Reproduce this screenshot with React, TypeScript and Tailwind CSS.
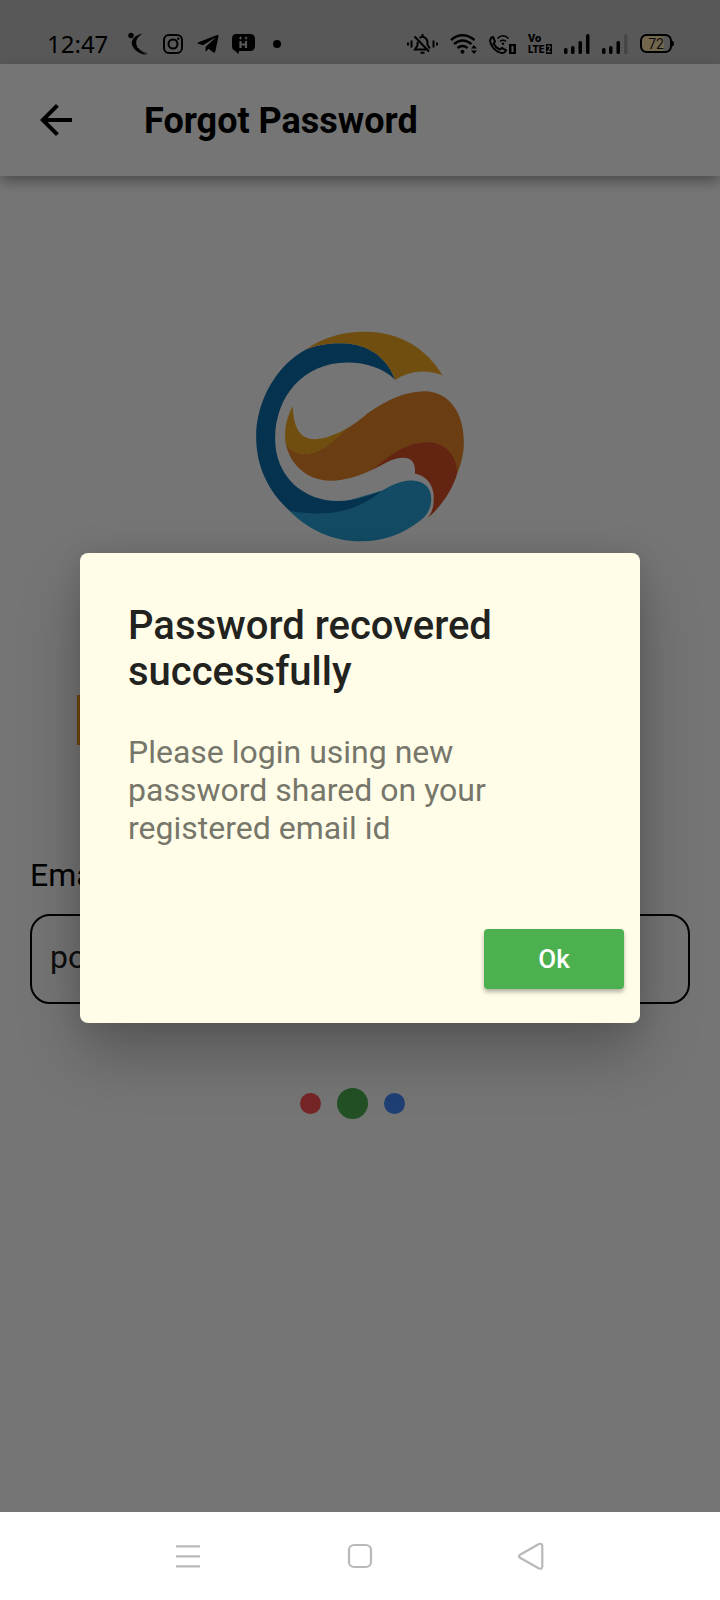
import { MdArrowBack } from "react-icons/md";
import { FaTelegramPlane } from "react-icons/fa";

function StatusBar() {
  return (
    <div className="flex h-16 items-center justify-between bg-[#bfbfbf] pt-6 pr-[46px] pl-[47px] text-black">
      <div className="flex items-center gap-[11px]">
        <time className="mr-[7px] font-['Noto_Sans',sans-serif] text-2xl leading-6">12:47</time>
        <svg className="size-6" viewBox="0 0 24 24" aria-hidden="true">
          <circle cx="5" cy="3.500" r="2.700" />
          <path d="M17 1.500C8 3 4 9 6.500 14C9 19 14 22 20.500 23C17 20.500 12 18.500 10.500 13C9.300 8 12 4 17 1.500Z" />
          <path d="M12 16C14.500 19 17 20.500 21 21.500" fill="none" stroke="currentColor" strokeWidth="0.800" />
        </svg>
        <svg className="size-6" viewBox="0 0 24 24" fill="none" stroke="currentColor" strokeWidth="2" aria-hidden="true">
          <rect x="3" y="3" width="18" height="18" rx="5" />
          <circle cx="12" cy="12" r="4.500" />
          <circle cx="17.300" cy="6.800" r="1.200" fill="currentColor" stroke="none" />
        </svg>
        <FaTelegramPlane className="size-6" aria-hidden="true" />
        <svg className="size-6" viewBox="0 0 24 24" aria-hidden="true">
          <path d="M5 2H19Q24 2 24 7V14Q24 19 19 19H8L7.500 22L3.500 18.500Q1 17.500 1 14V7Q1 2 5 2Z" />
          <path d="M9.500 9V16M15 9V16M9 12.500H15" fill="none" stroke="#bfbfbf" strokeWidth="2.200" />
          <path d="M9.500 4.500V7.500M8 6H11M15 4.500V7.500M13.500 6H16.500" fill="none" stroke="#bfbfbf" />
        </svg>
        <svg className="size-6" viewBox="0 0 24 24" aria-hidden="true">
          <circle cx="11" cy="12" r="4" />
        </svg>
      </div>
      <div className="flex items-center gap-3">
        <svg className="h-5 w-[31px]" viewBox="0 0 31 20" fill="none" stroke="currentColor" strokeWidth="2" aria-hidden="true">
          <path d="M1 8.500V11.500M4.500 6.500V13.500M26.500 6.500V13.500M30 8.500V11.500" />
          <path d="M12.500 4Q15.500 1.500 18.500 4Q20.500 5.500 20.500 9V11M19 15.500H8L10.500 11.500V8M7.500 2.500L22 17.500M20.500 11L23 14.500" />
          <path d="M15.500 0V3M13.500 18.700H17.500" />
        </svg>
        <svg className="h-5 w-[27px]" viewBox="0 0 27 20" fill="none" stroke="currentColor" strokeWidth="2.400" aria-hidden="true">
          <path d="M1 6Q12.500-3.500 24.500 6M4 10Q12.500 3 21.500 10M7.500 14Q12.500 10 17.500 14" />
          <circle cx="12.500" cy="17.800" r="2" fill="currentColor" stroke="none" />
          <path d="M21 14.500L24 11L27 14.500ZM21 16.500L24 20L27 16.500Z" fill="currentColor" stroke="none" />
        </svg>
        <svg className="h-5 w-[27px]" viewBox="0 0 27 20" fill="none" stroke="currentColor" strokeWidth="2" aria-hidden="true">
          <path d="M4 3L6 7.500L4.500 9.500Q6.500 13.500 10.500 15.500L13 14L17 16.500Q16 19 13 19Q8 18.500 4 13.500Q0 8 1.500 5Q2.200 3.300 4 3Z" />
          <path d="M8.500 4.500Q14-1 19.500 4.500M11 7.500Q14 5 17 7.500" strokeWidth="1.600" />
          <circle cx="14" cy="9.800" r="1.200" fill="currentColor" stroke="none" />
          <path d="M20 10H27V20H20ZM22.500 12V18H24.500V12Z" fill="currentColor" fillRule="evenodd" stroke="none" />
        </svg>
        <svg className="h-6 w-6 font-[Roboto,sans-serif] font-black" viewBox="0 0 24 24" fill="currentColor" aria-label="VoLTE 2">
          <text x="0" y="10" fontSize="11">Vo</text>
          <text x="0" y="21" fontSize="10">LTE</text>
          <path d="M18 12H24V22H18Z" />
          <path d="M19.200 14.700Q21 13 22.200 15Q22.300 16.500 19.600 19.600H22.700" fill="none" stroke="#bfbfbf" strokeWidth="1.200" />
        </svg>
        <svg className="h-5 w-[26px]" viewBox="0 0 26 20" fill="currentColor" aria-hidden="true">
          <rect x="0" y="14" width="3.500" height="6" rx="1.500" />
          <rect x="7" y="12" width="3.500" height="8" rx="1.500" />
          <rect x="14.500" y="7" width="3.500" height="13" rx="1.500" />
          <rect x="22" y="0" width="3.500" height="20" rx="1.500" />
        </svg>
        <svg className="h-5 w-[26px]" viewBox="0 0 26 20" fill="currentColor" aria-hidden="true">
          <rect x="0" y="14" width="3.500" height="6" rx="1.500" />
          <rect x="7" y="12" width="3.500" height="8" rx="1.500" />
          <rect x="14.500" y="7" width="3.500" height="13" rx="1.500" />
          <rect x="22" y="0" width="3.500" height="20" rx="1.500" opacity="0.200" />
        </svg>
        <svg className="h-5 w-[34px]" viewBox="0 0 34 20" aria-label="Battery 72 percent">
          <rect x="2" y="2" width="22" height="16" rx="4" fill="#f8dfa8" />
          <rect x="1" y="1" width="30" height="17" rx="5.500" fill="none" stroke="currentColor" strokeWidth="2" />
          <path d="M32 6.500Q34 7 34 9.500Q34 12 32 12.500Z" />
          <text x="16" y="14.500" textAnchor="middle" fontSize="14" fill="#222" className="font-[Roboto,sans-serif]">72</text>
        </svg>
      </div>
    </div>
  );
}

function Logo() {
  return (
    <svg className="h-[211px] w-[209px]" viewBox="48 62 627 634" aria-label="Logo">
      <path fill="#29a3d7" d="M148 602L295 580L425 542C465 517 495 510 520 511C555 514 574 535 574 565C575 595 560 617 543 630C490 673 430 694 365 694C280 695 205 660 148 602Z" />
      <path fill="#0d6fac" d="M196 118C230 104 270 97 310 99C385 102 440 140 466 209C430 175 380 157 322 157C190 157 105 260 105 385C105 500 190 573 295 573C345 572 390 558 425 542C380 580 320 610 240 610C205 610 175 608 148 602C85 545 48 470 48 380C48 270 110 165 196 118Z" />
      <path fill="#f3aa23" d="M196 118C250 80 310 64 375 64C480 64 560 115 608 195C560 175 505 182 466 209C440 140 385 102 310 99C270 97 230 104 196 118Z" />
      <path fill="#e68529" d="M136 395C150 430 200 445 245 415C275 397 290 377 320 355C345 342 360 328 385 308C440 268 500 243 555 243C630 245 672 310 672 395C672 430 665 460 652 490L600 430L540 425L440 452L395 480C355 498 320 512 272 512C195 512 145 455 136 395Z" />
      <path fill="#f3aa23" d="M158 287C160 345 175 387 225 387C255 387 290 372 325 353C290 380 255 432 190 432C160 432 142 415 136 395C132 355 140 320 158 287Z" />
      <path fill="#d95029" d="M395 480C440 445 490 396 565 396C615 398 652 435 652 490C640 535 605 590 562 625C580 605 583 580 581 550C575 515 555 497 525 490C527 465 520 443 490 443C455 443 430 465 395 480Z" />
    </svg>
  );
}

function NavigationBar() {
  return (
    <nav className="flex h-[88px] items-center justify-center gap-36 bg-white text-[#b9b9b9]">
      <button type="button" aria-label="Recent apps">
        <svg className="size-7" viewBox="0 0 28 28" fill="none" stroke="currentColor" strokeWidth="2.200">
          <path d="M2 4.300H26M2 14.300H26M2 24.300H26" />
        </svg>
      </button>
      <button type="button" aria-label="Home">
        <svg className="size-7" viewBox="0 0 28 28" fill="none" stroke="currentColor" strokeWidth="2.200">
          <rect x="3" y="3" width="22" height="22" rx="5" />
        </svg>
      </button>
      <button type="button" aria-label="Back">
        <svg className="size-7" viewBox="0 0 28 28" fill="none" stroke="currentColor" strokeWidth="2.200" strokeLinejoin="round">
          <path d="M2 12.800L21 2Q24 1 24.300 4V24.500Q24 27.500 21 26.500L2 15.800Q0 14.300 2 12.800Z" />
        </svg>
      </button>
    </nav>
  );
}

function RecoveredDialog() {
  return (
    <div className="absolute inset-0 flex items-center justify-center bg-black/54 px-20 pt-16">
      <div
        role="dialog"
        aria-modal="true"
        aria-labelledby="dialog-title"
        className="w-full max-w-[560px] rounded-lg bg-[#fffde7] pb-[34px] shadow-[0_30px_60px_rgba(0,0,0,0.26),0_0_24px_rgba(0,0,0,0.08)]"
      >
        <h2 id="dialog-title" className="px-12 pt-[50px] text-[40px] leading-[46px] font-medium text-[#22221f]">
          Password recovered successfully
        </h2>
        <p className="px-12 pt-[38px] text-[32px] leading-[38px] text-[#76766b]">
          Please login using new password shared on your registered email id
        </p>
        <div className="flex justify-end pt-[82px] pr-4">
          <button
            type="button"
            className="h-[60px] w-[140px] rounded bg-[#4caf50] text-[26px] leading-8 font-medium text-white shadow-[0_3px_4px_rgba(0,0,0,0.3)]"
          >
            Ok
          </button>
        </div>
      </div>
    </div>
  );
}

export default function App() {
  return (
    <div className="flex min-h-screen flex-col bg-white font-[Roboto,sans-serif]">
      <div className="relative flex flex-1 flex-col">
        <StatusBar />
        <header className="flex h-28 items-center gap-16 bg-white pl-8 text-black shadow-[0_6px_12px_-1px_rgba(0,0,0,0.36)]">
          <button type="button" aria-label="Back">
            <MdArrowBack className="size-12" />
          </button>
          <h1 className="pt-0.5 text-4xl leading-10 font-bold">Forgot Password</h1>
        </header>
        <main className="flex flex-1 flex-col px-[30px] pt-[155px]">
          <div className="flex justify-center">
            <Logo />
          </div>
          <div className="mx-[47px] mt-[153px] h-[50px] w-20 bg-[#f09d1e]" />
          <label htmlFor="email" className="mt-[111px] text-[32px] leading-[38px] text-black">
            Email
          </label>
          <input
            id="email"
            type="email"
            defaultValue="po"
            className="mt-5 h-[90px] w-full rounded-[20px] border-2 border-black bg-white px-[18px] pb-1 text-[32px] text-[#222]"
          />
          <div className="flex items-center justify-center gap-4 pt-[84px] pr-4" role="status" aria-label="Loading">
            <span className="size-[21px] rounded-full bg-[#ff5252]" />
            <span className="size-[31px] rounded-full bg-[#4caf50]" />
            <span className="size-[21px] rounded-full bg-[#448aff]" />
          </div>
        </main>
        <RecoveredDialog />
      </div>
      <NavigationBar />
    </div>
  );
}
